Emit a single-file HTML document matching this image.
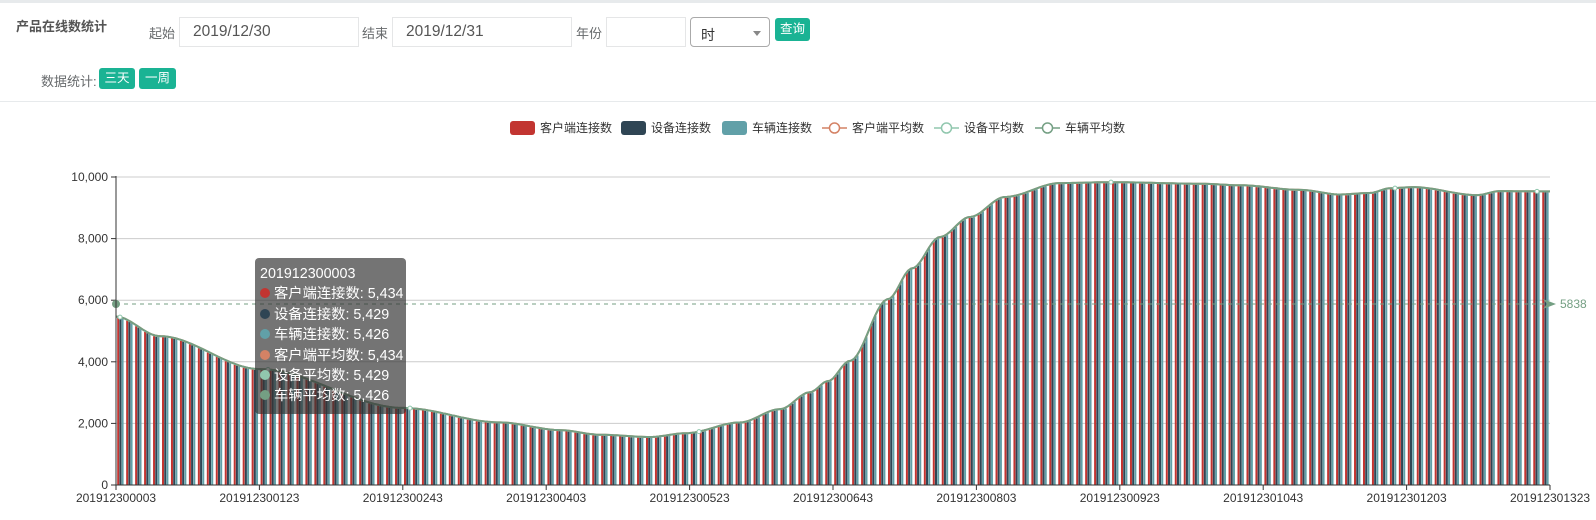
<!DOCTYPE html>
<html><head><meta charset="utf-8">
<style>
*{box-sizing:border-box;margin:0;padding:0}
body{width:1596px;height:520px;background:#fff;font-family:"Liberation Sans","Noto Sans CJK SC",sans-serif;color:#676a6c;position:relative;overflow:hidden}
.abs{position:absolute}
.inp{position:absolute;border:1px solid #e5e6e7;height:30px;font-size:15.5px;color:#555;padding:5px 0 0 13px}
.btn{position:absolute;background:#1ab394;color:#fff;font-size:12.5px;border-radius:3px;text-align:center}
.lbl{position:absolute;font-size:13px;color:#676a6c}
</style></head><body>
<div class="abs" style="left:0;top:0;width:1596px;height:3px;background:#e7eaec"></div>
<div class="lbl" style="left:16px;top:16px;font-weight:bold;color:#555">产品在线数统计</div>
<div class="lbl" style="left:149px;top:23px">起始</div>
<div class="inp" style="left:179px;top:17px;width:180px">2019/12/30</div>
<div class="lbl" style="left:362px;top:23px">结束</div>
<div class="inp" style="left:392px;top:17px;width:180px">2019/12/31</div>
<div class="lbl" style="left:576px;top:23px">年份</div>
<div class="inp" style="left:606px;top:17px;width:80px"></div>
<div class="inp" style="left:690px;top:17px;width:80px;border-color:#aaa;border-radius:4px;color:#333;font-size:14px;padding:7px 0 0 10px">时<span style="position:absolute;right:8px;top:13px;border-left:4px solid transparent;border-right:4px solid transparent;border-top:5px solid #888"></span></div>
<div class="btn" style="left:775px;top:18px;width:35px;height:23px;line-height:23px">查询</div>
<div class="lbl" style="left:41px;top:71px">数据统计:</div>
<div class="btn" style="left:99px;top:68px;width:36px;height:21px;line-height:21px">三天</div>
<div class="btn" style="left:139px;top:68px;width:37px;height:21px;line-height:21px">一周</div>
<div class="abs" style="left:0;top:101px;width:1596px;height:1px;background:#e7eaec"></div>
<svg id="c" class="abs" style="left:0;top:0" width="1596" height="520" font-family="Liberation Sans,Noto Sans CJK SC,sans-serif"></svg>
<div class="abs" style="left:255px;top:258px;width:151px;height:156px;background:rgba(50,50,50,0.68);border-radius:4px;color:#fff;font-size:14.3px;line-height:20.4px;padding:6px 0 0 5px">
<div>201912300003</div>
<div><span style="display:inline-block;width:10px;height:10px;border-radius:5px;background:#c23531;margin-right:4px"></span>客户端连接数: 5,434</div>
<div><span style="display:inline-block;width:10px;height:10px;border-radius:5px;background:#2f4554;margin-right:4px"></span>设备连接数: 5,429</div>
<div><span style="display:inline-block;width:10px;height:10px;border-radius:5px;background:#61a0a8;margin-right:4px"></span>车辆连接数: 5,426</div>
<div><span style="display:inline-block;width:10px;height:10px;border-radius:5px;background:#d48265;margin-right:4px"></span>客户端平均数: 5,434</div>
<div><span style="display:inline-block;width:10px;height:10px;border-radius:5px;background:#91c7ae;margin-right:4px"></span>设备平均数: 5,429</div>
<div><span style="display:inline-block;width:10px;height:10px;border-radius:5px;background:#749f83;margin-right:4px"></span>车辆平均数: 5,426</div>
</div>
<script>
var s='',X0=116,X1=1550,Y0=485,K=0.0308;
function y(v){return Y0-v*K}
var yl=['0','2,000','4,000','6,000','8,000','10,000'];
for(var i=0;i<=5;i++){var yy=y(i*2000);s+='<line x1="'+X0+'" x2="'+X1+'" y1="'+yy+'" y2="'+yy+'" stroke="#ccc"/>';
s+='<line x1="'+(X0-5)+'" x2="'+X0+'" y1="'+yy+'" y2="'+yy+'" stroke="#333"/>';
s+='<text x="'+(X0-8)+'" y="'+(yy+4)+'" font-size="12" fill="#333" text-anchor="end">'+yl[i]+'</text>';}
var pts=[[116,5434],[160,4800],[260,3730],[403,2470],[500,2000],[560,1750],[600,1600],[650,1526],[686,1650],[740,2000],[780,2430],[810,2980],[828,3340],[850,4000],[888,6000],[912,7000],[940,8020],[970,8670],[1005,9320],[1060,9770],[1110,9800],[1200,9750],[1240,9700],[1300,9550],[1340,9400],[1370,9450],[1390,9600],[1413,9640],[1477,9380],[1500,9510],[1550,9500]];
function val(x){for(var i=1;i<pts.length;i++){if(x<=pts[i][0]){var a=pts[i-1],b=pts[i],t=(x-a[0])/(b[0]-a[0]);t=t*t*(3-2*t);return a[1]+(b[1]-a[1])*t;}}return 9500}
var N=160,W=(X1-X0)/N,cols=['#c23531','#2f4554','#61a0a8'];
for(var k=0;k<N;k++){var bx=X0+k*W+1.2;for(var j=0;j<3;j++){var x=bx+j*2.2,v=val(x+1);s+='<rect x="'+x.toFixed(2)+'" y="'+y(v).toFixed(1)+'" width="2" height="'+(v*K).toFixed(1)+'" fill="'+cols[j]+'"/>';}}
var d='';for(var x=X0;x<=X1;x+=3){d+=(x==X0?'M':'L')+x+' '+(y(val(x))-1).toFixed(1)}
s+='<path d="'+d+'" fill="none" stroke="#d48265" stroke-width="2"/><path d="'+d+'" fill="none" stroke="#749f83" stroke-width="2"/>';
s+='<line x1="'+X0+'" x2="1556" y1="304" y2="304" stroke="#749f83" stroke-dasharray="4,4"/>';
s+='<circle cx="'+X0+'" cy="304" r="4" fill="#749f83"/><path d="M1543 299 L1556 304 L1543 309 L1547 304Z" fill="#749f83"/>';
s+='<text x="1560" y="308" font-size="12" fill="#749f83">5838</text>';
[120,268,410,699,1111,1395,1537].forEach(function(p){s+='<circle cx="'+p+'" cy="'+(y(val(p))-1)+'" r="2" fill="#fff" stroke="#91c7ae"/>'});
s+='<line x1="'+X0+'" x2="'+X0+'" y1="176" y2="485" stroke="#333"/><line x1="'+X0+'" x2="'+X1+'" y1="485" y2="485" stroke="#333"/>';
var lab=['0003','0123','0243','0403','0523','0643','0803','0923','1043','1203','1323'];
for(var i=0;i<=10;i++){var xx=X0+i*(X1-X0)/10;s+='<line x1="'+xx+'" x2="'+xx+'" y1="485" y2="490" stroke="#333"/><text x="'+xx+'" y="502" font-size="12" fill="#333" text-anchor="middle">2019123'+'0'+lab[i]+'</text>';}
var L=[[510,'rect','#c23531','客户端连接数'],[621,'rect','#2f4554','设备连接数'],[722,'rect','#61a0a8','车辆连接数'],[822,'line','#d48265','客户端平均数'],[934,'line','#91c7ae','设备平均数'],[1035,'line','#749f83','车辆平均数']];
L.forEach(function(l){if(l[1]=='rect')s+='<rect x="'+l[0]+'" y="121" width="25" height="14" rx="3" fill="'+l[2]+'"/>';else s+='<line x1="'+l[0]+'" x2="'+(l[0]+25)+'" y1="128" y2="128" stroke="'+l[2]+'" stroke-width="1.5"/><circle cx="'+(l[0]+12.5)+'" cy="128" r="5" fill="#fff" stroke="'+l[2]+'" stroke-width="1.5"/>';
s+='<text x="'+(l[0]+30)+'" y="132" font-size="12" fill="#333">'+l[3]+'</text>'});
document.getElementById('c').innerHTML=s;
</script>
</body></html>
